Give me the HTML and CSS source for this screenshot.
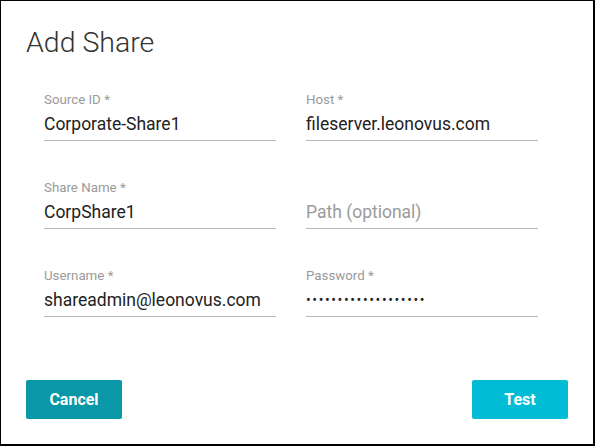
FILE: index.html
```html
<!DOCTYPE html>
<html>
<head>
<meta charset="utf-8">
<link rel="stylesheet" href="styles.css">
</head>
<body>
<div class="dialog">
  <h1 class="title">Add Share</h1>
  <div class="form">
    <div class="field">
      <div class="label">Source ID *</div>
      <div class="value">Corporate-Share1</div>
    </div>
    <div class="field">
      <div class="label">Host *</div>
      <div class="value">fileserver.leonovus.com</div>
    </div>
    <div class="field">
      <div class="label">Share Name *</div>
      <div class="value">CorpShare1</div>
    </div>
    <div class="field">
      <div class="label"></div>
      <div class="value placeholder">Path (optional)</div>
    </div>
    <div class="field">
      <div class="label">Username *</div>
      <div class="value">shareadmin@leonovus.com</div>
    </div>
    <div class="field">
      <div class="label">Password *</div>
      <div class="value dots">•••••••••••••••••••</div>
    </div>
  </div>
  <div class="actions">
    <button class="btn btn-cancel">Cancel</button>
    <button class="btn btn-test">Test</button>
  </div>
</div>
</body>
</html>
```
FILE: styles.css
```css
html, body {
  margin: 0;
  padding: 0;
  background: #fff;
}
.dialog {
  box-sizing: border-box;
  width: 595px;
  height: 446px;
  border: 1px solid #000;
  border-right-width: 2px;
  border-bottom-width: 2px;
  padding: 25px 0 0 0;
  font-family: Roboto, "Noto Sans", sans-serif;
  display: flex;
  flex-direction: column;
}
.title {
  margin: 0 0 0 25px;
  font-size: 28.5px;
  line-height: 34px;
  font-weight: 300;
  color: #333;
}
.form {
  margin: 32px 0 0 43px;
  display: grid;
  grid-template-columns: 232px 232px;
  column-gap: 30px;
  row-gap: 39px;
}
.field {
  display: flex;
  flex-direction: column;
  border-bottom: 1px solid #b8b8b8;
}
.label {
  font-size: 13.3px;
  line-height: 16px;
  height: 16px;
  color: #9a9a9a;
}
.value {
  margin-top: 4px;
  font-size: 17.5px;
  line-height: 24px;
  padding-bottom: 4px;
  color: #222;
  white-space: nowrap;
}
.placeholder {
  color: #9a9a9a;
}
.dots {
  font-size: 14px;
  letter-spacing: 1.6px;
  color: #222;
}
.actions {
  margin: 63px 25px 0 25px;
  display: flex;
  justify-content: space-between;
}
.btn {
  width: 96px;
  height: 39px;
  border: none;
  border-radius: 2px;
  color: #fff;
  font-family: Roboto, "Noto Sans", sans-serif;
  font-size: 16px;
  font-weight: 700;
  padding: 0;
}
.btn-cancel {
  background: #0a97a7;
}
.btn-test {
  background: #00bcd4;
}
```
